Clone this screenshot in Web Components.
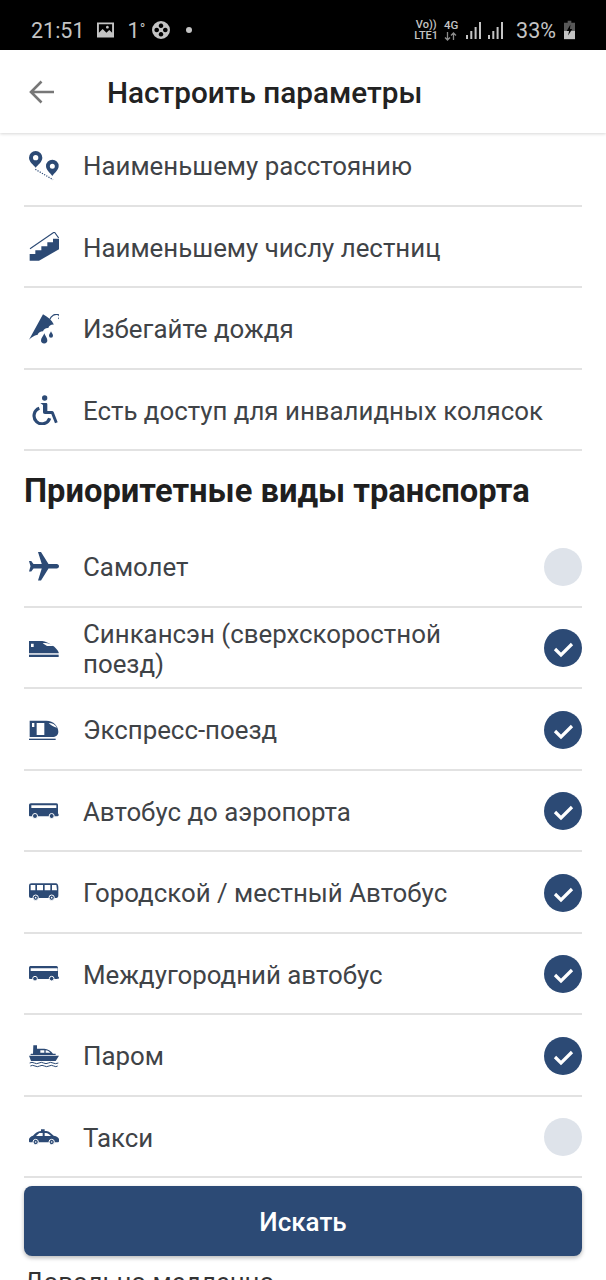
<!DOCTYPE html>
<html lang="ru">
<head>
<meta charset="utf-8">
<title>Настроить параметры</title>
<style>
  html, body { margin: 0; padding: 0; background: #fff; }
  body { font-family: Roboto, "Liberation Sans", sans-serif; width: 606px; height: 1280px; overflow: hidden; }
</style>
</head>
<body>
<app-screen>
  <status-bar></status-bar>
  <top-bar title-text="Настроить параметры"></top-bar>
  <option-list>
    <option-row icon="pins" first>Наименьшему расстоянию</option-row>
    <option-row icon="stairs">Наименьшему числу лестниц</option-row>
    <option-row icon="rain">Избегайте дождя</option-row>
    <option-row icon="wheelchair">Есть доступ для инвалидных колясок</option-row>
    <section-title>Приоритетные виды транспорта</section-title>
    <option-row icon="plane" check="off">Самолет</option-row>
    <option-row icon="shinkansen" check="on">Синкансэн (сверхскоростной поезд)</option-row>
    <option-row icon="express" check="on">Экспресс-поезд</option-row>
    <option-row icon="airportbus" check="on">Автобус до аэропорта</option-row>
    <option-row icon="citybus" check="on">Городской / местный Автобус</option-row>
    <option-row icon="coach" check="on">Междугородний автобус</option-row>
    <option-row icon="ferry" check="on">Паром</option-row>
    <option-row icon="taxi" check="off">Такси</option-row>
    <speed-title>Довольно медленно</speed-title>
  </option-list>
  <search-button>Искать</search-button>
</app-screen>

<script>
const NAVY = '#2c4a75';

// all transport icons are drawn on a 90x90 box, shown at 30x30
const ICONS = {
  pins: `
    <path fill-rule="evenodd" d="M20 0a20 20 0 0 1 20 20c0 12-13 21-20 30C13 41 0 32 0 20A20 20 0 0 1 20 0zm0 12a8 8 0 1 0 0 16 8 8 0 0 0 0-16z"/>
    <path fill-rule="evenodd" d="M70 26a19 19 0 0 1 19 19c0 12-12 20-19 30C63 65 51 57 51 45a19 19 0 0 1 19-19zm0 12a7.500 7.500 0 1 0 0 15 7.500 7.500 0 0 0 0-15z"/>
    <path d="M19 55 L72 86" fill="none" stroke="${NAVY}" stroke-width="3.600" stroke-dasharray="3.600 4"/>`,
  stairs: `
    <path d="M2 86V66H19V55H37V43H55V31H72V20H90V52L30 86z"/>
    <path d="M3 50 76 0 89 18" fill="none" stroke="${NAVY}" stroke-width="3.400"/>`,
  rain: `
    <path d="M0 77 42 1C55 8 68 18 75 32 66 31 60 36 58 42 50 41 44 46 42 52 34 52 28 57 26 62 14 64 8 70 0 77z"/>
    <path d="M62 17C66 6 78-2 88 2 94 6 92 12 88 14" fill="none" stroke="${NAVY}" stroke-width="3.600"/>
    <path d="M46 58C48 66 55 71 55 79a9.500 9.500 0 0 1-19 0C36 71 44 66 46 58z"/>
    <path d="M66 52C68 57 72 60 72 65a6 6 0 0 1-12 0C60 60 64 57 66 52z"/>`,
  wheelchair: `
    <circle cx="47" cy="9" r="8"/>
    <path d="M34 24h17c3 0 4 2 4 4v20h14c2 0 4 1 5 3l12 31-8 3-11-28H48c-4 0-6-2-6-6V30z"/>
    <path d="M31 40A24 24 0 1 0 62 70" fill="none" stroke="${NAVY}" stroke-width="9.500"/>`,
  plane: `<path transform="rotate(90 45 45) translate(-9 -9) scale(4.500)" d="M21 16v-2l-8-5V3.500c0-.83-.67-1.500-1.500-1.500S10 2.670 10 3.500V9l-8 5v2l8-2.500V19l-2 1.500V22l3.500-1 3.500 1v-1.500L13 19v-5.500l8 2.500z"/>`,
  shinkansen: `
    <path fill-rule="evenodd" d="M0 24H40C58 26 84 44 89 58V61H0zM6 32V42H14V32zM41 31 54 39H72C66 33 52 28 41 31z"/>
    <rect x="0" y="65" width="89" height="7"/>`,
  express: `
    <path fill-rule="evenodd" d="M2 17H52C74 17 88 34 88 50 88 60 80 66 70 66H2zM9 24V36H16V24zM23 24V60H46V24zM59 24C67 32 74 36 84 38 78 28 70 24 59 24z"/>
    <rect x="0" y="71" width="80" height="4"/>`,
  airportbus: `
    <path fill-rule="evenodd" d="M6 22H82C86 22 87 24 87 28V50C87 53 89 54 89 56V58C89 60 86 61 84 61H4C1 61 0 60 0 58V28C0 24 2 22 6 22zM7 28V36H82V28z"/>
    <circle cx="18" cy="60" r="7.500" stroke="#fff" stroke-width="3"/><circle cx="68" cy="60" r="7.500" stroke="#fff" stroke-width="3"/>`,
  citybus: `
    <path fill-rule="evenodd" d="M8 16H80C86 16 88 22 88 28V52C88 58 86 60 82 60H6C2 60 0 58 0 54V24C0 18 3 16 8 16zM5 21V37H19V21zM24 21V37H42V21zM47 21V37H64V21zM69 21V37H84L82 21z"/>
    <circle cx="20" cy="59" r="8" stroke="#fff" stroke-width="3"/><circle cx="68" cy="59" r="8" stroke="#fff" stroke-width="3"/>
    <circle cx="20" cy="59" r="2.500" fill="#fff"/><circle cx="68" cy="59" r="2.500" fill="#fff"/>`,
  coach: `
    <path fill-rule="evenodd" d="M6 21H82C86 21 87 24 87 28V50C87 53 90 54 90 56V58C90 59 86 60 84 60H4C1 60 0 59 0 56V27C0 23 2 21 6 21zM5 28V36H86V28z"/>
    <circle cx="18" cy="59" r="7" stroke="#fff" stroke-width="3"/><circle cx="68" cy="59" r="7" stroke="#fff" stroke-width="3"/>`,
  ferry: `
    <path fill-rule="evenodd" d="M13 13H24V23H46C56 23 66 30 72 38H80V42H4L6 38H12zM34 28V35H46V28zM50 28V35H64C60 31 56 28 50 28z"/>
    <path d="M0 44H90L80 60H6z"/>
    <path d="M2 66Q9 62 16 66T30 66 44 66 58 66 72 66 88 66M4 75Q11 71 18 75T32 75 46 75 60 75 74 75 86 75" fill="none" stroke="${NAVY}" stroke-width="3"/>`,
  taxi: `
    <path fill-rule="evenodd" d="M36 27V22H47V27H52C60 27 68 36 74 41 84 43 90 47 90 52V58C90 60 88 61 86 61H4C1 61 0 60 0 58V52C0 47 6 43 12 41 18 34 26 27 36 27zM31 33 21 42H41V33zM47 33V42H66C62 38 56 33 51 33z"/>
    <circle cx="20" cy="60" r="8" stroke="#fff" stroke-width="3"/><circle cx="68" cy="60" r="8" stroke="#fff" stroke-width="3"/>
    <circle cx="20" cy="60" r="2.500" fill="#fff"/><circle cx="68" cy="60" r="2.500" fill="#fff"/>`
};

class AppScreen extends HTMLElement {
  constructor() {
    super();
    this.attachShadow({mode: 'open'}).innerHTML = `
    <style>
      :host {
        display: flex;
        flex-direction: column;
        position: relative;
        width: 606px;
        height: 1280px;
        overflow: hidden;
        background: #fff;
      }
    </style>
    <slot></slot>`;
  }
}

class StatusBar extends HTMLElement {
  constructor() {
    super();
    this.attachShadow({mode: 'open'}).innerHTML = `
    <style>
      :host {
        display: flex;
        flex: none;
        justify-content: space-between;
        align-items: center;
        box-sizing: border-box;
        height: 50px;
        padding: 10px 31px 0 31px;
        background: #000;
        color: #c4c4c4;
        font-family: Roboto, sans-serif;
        font-size: 21.500px;
      }
      .side { display: flex; align-items: center; }
      svg { display: block; flex: none; fill: #c4c4c4; }
      .tiny { font-size: 11px; line-height: 11px; font-weight: 500; text-align: center; white-space: nowrap; }
      .g { width: 13px; font-size: 11.500px; }
      .g svg { margin: 1px auto 0; fill: none; stroke: #8c8c8c; stroke-width: 1.300; }
    </style>
    <div class="side">
      <span>21:51</span>
      <svg style="margin-left:12px" width="17" height="16" viewBox="0 0 18 16"><path fill-rule="evenodd" d="M0 0H18V16H0zM2 2V11L6 7 10 11 13 8 16 11V2zM11 3.500a1.500 1.500 0 1 0 .01 0z"/></svg>
      <span style="margin-left:14px">1<span style="font-size:15px;vertical-align:4px">°</span></span>
      <svg style="margin-left:7px" width="18" height="18" viewBox="0 0 18 18"><path fill-rule="evenodd" d="M9 0a9 9 0 1 1 0 18A9 9 0 0 1 9 0zM9 2.500a2.300 2.300 0 1 0 .01 0zM9 11a2.300 2.300 0 1 0 .01 0zM4.700 6.700a2.300 2.300 0 1 0 .01 0zM13.300 6.700a2.300 2.300 0 1 0 .01 0z"/></svg>
      <svg style="margin-left:16px" width="6" height="6" viewBox="0 0 6 6"><circle cx="3" cy="3" r="3"/></svg>
    </div>
    <div class="side">
      <div class="tiny">Vo))<br>LTE1</div>
      <div class="tiny g" style="margin-left:6px">4G<svg width="13" height="9" viewBox="0 0 13 9"><path d="M3.500 0V8M1 5.500 3.500 8 6 5.500M9.500 8V1M7 3.500 9.500 1 12 3.500"/></svg></div>
      <svg style="margin-left:9px" width="15" height="17" viewBox="0 0 15 17"><path d="M0 13h2v4H0zM4.300 9h2v8h-2zM8.600 5h2v12h-2zM13 0h2v17h-2z"/></svg>
      <svg style="margin-left:7px" width="15" height="17" viewBox="0 0 15 17"><path d="M0 13h2v4H0zM4.300 9h2v8h-2zM8.600 5h2v12h-2zM13 0h2v17h-2z"/></svg>
      <span style="margin-left:13px">33%</span>
      <svg style="margin-left:8px" width="11" height="20" viewBox="0 0 12 20"><path opacity=".45" d="M4 0H8V2H12V11H0V2H4z"/><path d="M0 11H12V20H0z"/><path fill="#000" d="M7 4 3 11H5.500L4.500 16 9 9H6.500z"/></svg>
    </div>`;
  }
}

class TopBar extends HTMLElement {
  constructor() {
    super();
    this.attachShadow({mode: 'open'}).innerHTML = `
    <style>
      :host {
        display: flex;
        flex: none;
        align-items: center;
        box-sizing: border-box;
        height: 83px;
        padding-left: 29px;
        background: #fff;
        box-shadow: 0 1px 3px rgba(0,0,0,.16);
        position: relative;
        z-index: 2;
      }
      svg { display: block; flex: none; }
      h1 {
        margin: 2px 0 0 52px;
        font: 500 29.700px Roboto, sans-serif;
        color: #222;
      }
    </style>
    <svg width="26" height="24" viewBox="0 0 26 24"><path d="M25 12H2M12.500 1.500 2 12l10.500 10.500" fill="none" stroke="#777" stroke-width="2.600"/></svg>
    <h1></h1>`;
    this.shadowRoot.querySelector('h1').textContent = this.getAttribute('title-text');
  }
}

class OptionList extends HTMLElement {
  constructor() {
    super();
    this.attachShadow({mode: 'open'}).innerHTML = `
    <style>
      :host {
        display: block;
        flex: 1;
        min-height: 0;
        overflow: hidden;
        padding: 0 24px;
      }
      .inner { margin-top: -8px; }
    </style>
    <div class="inner"><slot></slot></div>`;
  }
}

class OptionRow extends HTMLElement {
  connectedCallback() {
    if (this.shadowRoot) return;
    const check = this.getAttribute('check');
    let mark = '';
    if (check === 'on') {
      mark = `<svg class="check" width="38" height="38" viewBox="0 0 38 38"><circle cx="19" cy="19" r="19" fill="${NAVY}"/><path d="M11 20l6 6 11-11" fill="none" stroke="#fff" stroke-width="3.200"/></svg>`;
    } else if (check === 'off') {
      mark = `<svg class="check" width="38" height="38" viewBox="0 0 38 38"><circle cx="19" cy="19" r="19" fill="#dee3ea"/></svg>`;
    }
    this.attachShadow({mode: 'open'}).innerHTML = `
    <style>
      :host {
        display: flex;
        align-items: center;
        box-sizing: border-box;
        height: 81.500px;
        padding-top: 2px;
        border-bottom: 2px solid #e2e2e2;
        color: #3f4347;
        font-family: Roboto, sans-serif;
        font-size: 25.850px;
        line-height: 30px;
      }
      .icon { display: block; flex: none; margin: 0 24px 0 5px; fill: ${NAVY}; }
      .label { flex: 1; min-width: 0; padding-top: 1px; }
      :host([check]) .label { padding-right: 30px; }
      .check { display: block; flex: none; }
    </style>
    <svg class="icon" width="30" height="30" viewBox="0 0 90 90">${ICONS[this.getAttribute('icon')]}</svg>
    <span class="label"><slot></slot></span>
    ${mark}`;
  }
}

class SectionTitle extends HTMLElement {
  constructor() {
    super();
    this.attachShadow({mode: 'open'}).innerHTML = `
    <style>
      :host {
        display: block;
        box-sizing: border-box;
        height: 75px;
        padding-top: 21px;
        font: 700 32.700px/38px Roboto, sans-serif;
        color: #1f1f1f;
        white-space: nowrap;
      }
    </style>
    <slot></slot>`;
  }
}

class SpeedTitle extends HTMLElement {
  constructor() {
    super();
    this.attachShadow({mode: 'open'}).innerHTML = `
    <style>
      :host {
        display: block;
        padding-top: 89px;
        font: 400 25.850px/30px Roboto, sans-serif;
        color: #333;
        white-space: nowrap;
      }
    </style>
    <slot></slot>`;
  }
}

class SearchButton extends HTMLElement {
  constructor() {
    super();
    this.attachShadow({mode: 'open'}).innerHTML = `
    <style>
      :host {
        position: absolute;
        left: 24px;
        right: 24px;
        top: 1186px;
        z-index: 3;
        display: flex;
        align-items: center;
        justify-content: center;
        box-sizing: border-box;
        height: 70px;
        padding-top: 2px;
        border-radius: 8px;
        background: ${NAVY};
        box-shadow: 0 2px 4px rgba(0,0,0,.28);
        color: #fff;
        font: 500 26px Roboto, sans-serif;
      }
    </style>
    <slot></slot>`;
  }
}

customElements.define('app-screen', AppScreen);
customElements.define('status-bar', StatusBar);
customElements.define('top-bar', TopBar);
customElements.define('option-list', OptionList);
customElements.define('option-row', OptionRow);
customElements.define('section-title', SectionTitle);
customElements.define('speed-title', SpeedTitle);
customElements.define('search-button', SearchButton);
</script>
</body>
</html>
